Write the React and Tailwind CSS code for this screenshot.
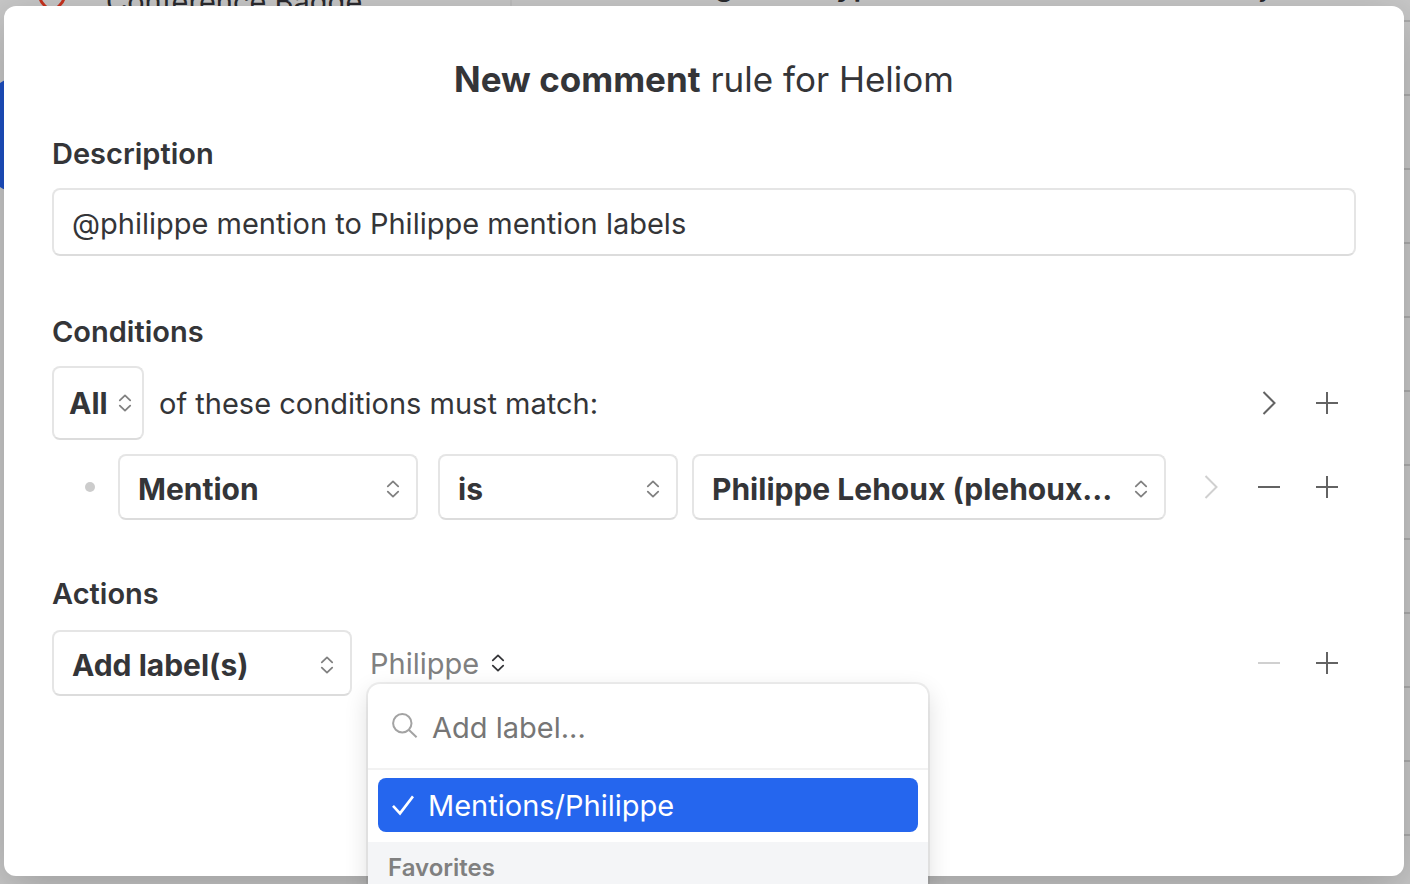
import React, { useState } from 'react';

function UpDown({ className }) {
  return (
    <svg
      className={className}
      width="14"
      height="18"
      viewBox="0 0 14 18"
      fill="none"
      stroke="currentColor"
      strokeWidth="1.8"
      strokeLinecap="round"
      strokeLinejoin="round"
      aria-hidden
    >
      <path d="M1.8 6.4 7 1.4l5.2 5M1.8 11.6 7 16.6l5.2-5" />
    </svg>
  );
}

function Picker({ label, value, onChange, options, className }) {
  return (
    <div className={`relative h-[66px] ${className}`}>
      <select
        aria-label={label}
        value={value}
        onChange={(e) => onChange(e.target.value)}
        className="w-full h-full appearance-none rounded-lg border-2 border-[#e5e5e5] border-b-[#dcdcdc] bg-white pl-[18px] pr-12 pt-1 text-[30px] font-bold text-ellipsis outline-none"
      >
        {options.map((o) => (
          <option key={o}>{o}</option>
        ))}
      </select>
      <UpDown className="pointer-events-none absolute right-[18px] top-[26px] text-[#808080]" />
    </div>
  );
}

const ICON_PATHS = {
  next: 'M6.5 1 17.5 12 6.5 23',
  remove: 'M1 12h22',
  add: 'M1 12h22M12 1v22',
};

function IconButton({ icon, label, disabled }) {
  return (
    <button
      type="button"
      aria-label={label}
      disabled={disabled}
      className="flex h-12 w-[58px] shrink-0 items-center justify-center text-[#636363] disabled:text-[#d0d0d0]"
    >
      <svg width="24" height="24" viewBox="0 0 24 24" fill="none" stroke="currentColor" strokeWidth="2" aria-hidden>
        <path d={ICON_PATHS[icon]} />
      </svg>
    </button>
  );
}

function Backdrop() {
  return (
    <div className="absolute inset-0 flex overflow-hidden bg-[#c8c8c8]" aria-hidden>
      <div className="w-[512px] shrink-0 border-r-2 border-[#bfbfbf]">
        <div className="flex h-5 items-end gap-10 pl-[38px]">
          <svg className="mb-2 shrink-0" width="28" height="24" viewBox="0 0 28 24" fill="none" stroke="#c8321e" strokeWidth="3">
            <path d="M2 9c0 5 3 7 6 10l6 4 6-4c3-3 6-5 6-10" />
          </svg>
          <span className="text-[29px] leading-9 text-[#2a2a2e]">Conference Badge</span>
        </div>
        <div className="mt-[60px] h-[110px] w-40 -ml-1 rounded-xl bg-[#1e50c4]" />
      </div>
      <div className="min-w-0 flex-1">
        <div className="flex h-[22px] items-end justify-between border-b-2 border-[#acacac] pl-[30px] pr-[136px] text-[29px] leading-9 text-[#2a2a2e]">
          <p className="mb-4 font-semibold whitespace-nowrap">[Missive] Bug in the types</p>
          <time className="mb-4">Friday</time>
        </div>
        {Array.from({ length: 12 }, (_, i) => (
          <div key={i} className="h-[74px] border-b-2 border-[#acacac]" />
        ))}
      </div>
    </div>
  );
}

function LabelMenu() {
  const [query, setQuery] = useState('');
  return (
    <div className="absolute left-0 top-[54px] z-10 w-[560px] rounded-xl bg-white shadow-[0_0_0_2px_rgba(0,0,0,0.06),0_8px_24px_rgba(0,0,0,0.14)]">
      <div className="flex h-[86px] items-center gap-3.5 border-b-2 border-[#f2f2f2] pl-6 pr-5">
        <svg width="26" height="26" viewBox="0 0 26 26" fill="none" stroke="#a3a3a3" strokeWidth="2" aria-hidden>
          <circle cx="10.3" cy="10.3" r="9.2" />
          <path d="m17 17 7.6 7.2" />
        </svg>
        <input
          type="text"
          aria-label="Add label"
          placeholder="Add label..."
          value={query}
          onChange={(e) => setQuery(e.target.value)}
          className="min-w-0 flex-1 pt-1 text-[29px] outline-none placeholder:text-[#767676]"
        />
      </div>
      <div className="px-2.5 pt-2 pb-2.5">
        <button
          type="button"
          className="flex h-[54px] w-full items-center gap-3.5 rounded-lg bg-[#2566ee] pl-3.5 text-left text-[29px] text-white"
        >
          <svg width="22" height="22" viewBox="0 0 22 22" fill="none" stroke="currentColor" strokeWidth="2.6" aria-hidden>
            <path d="m1 11.8 7 7.6L21 2.4" />
          </svg>
          <span className="pt-0.5">Mentions/Philippe</span>
        </button>
      </div>
      <h3 className="bg-[#f4f5f7] px-5 text-[24px] leading-[52px] font-semibold text-[#808080]">Favorites</h3>
    </div>
  );
}

export default function App() {
  const [description, setDescription] = useState('@philippe mention to Philippe mention labels');
  const [match, setMatch] = useState('All');
  const [field, setField] = useState('Mention');
  const [operator, setOperator] = useState('is');
  const [user, setUser] = useState('Philippe Lehoux (plehoux…');
  const [action, setAction] = useState('Add label(s)');

  return (
    <div className="relative flex h-screen overflow-hidden pt-1.5 pr-1.5 pb-2 pl-1 font-[Inter,sans-serif] text-[29px] text-[#343538]">
      <Backdrop />
      <main className="relative min-w-0 flex-1 rounded-xl bg-white px-12 pt-[54px] shadow-[0_12px_48px_rgba(0,0,0,0.22)]">
        <h1 className="text-center text-[35px] leading-[38px]">
          <b>New comment</b> rule for Heliom
        </h1>

        <label htmlFor="description" className="mt-[38px] mb-4 block leading-9 font-semibold">
          Description
        </label>
        <input
          id="description"
          type="text"
          value={description}
          onChange={(e) => setDescription(e.target.value)}
          className="h-[68px] w-full rounded-lg border-2 border-[#e5e5e5] border-b-[#dcdcdc] px-[18px] pt-0.5 outline-none"
        />

        <section className="mt-[58px]">
          <h2 className="mb-4 leading-9 font-semibold">Conditions</h2>
          <div className="flex items-center">
            <div className="relative h-[74px] w-[92px]">
              <select
                aria-label="Match"
                value={match}
                onChange={(e) => setMatch(e.target.value)}
                className="h-full w-full appearance-none rounded-lg border-2 border-[#e5e5e5] border-b-[#dcdcdc] bg-white pl-[15px] text-[30px] font-bold outline-none"
              >
                <option>All</option>
                <option>Any</option>
              </select>
              <UpDown className="pointer-events-none absolute right-3 top-7 text-[#808080]" />
            </div>
            <span className="ml-[15px] flex-1 pt-0.5">of these conditions must match:</span>
            <IconButton icon="next" label="Nest conditions" />
            <IconButton icon="add" label="Add condition" />
          </div>
          <div className="mt-3.5 flex items-center">
            <span className="w-[66px] shrink-0 pl-[33px]">
              <span className="block size-2.5 rounded-full bg-[#cccccc]" />
            </span>
            <Picker label="Field" className="w-[300px] mr-5" value={field} onChange={setField} options={['Mention', 'Author']} />
            <Picker label="Operator" className="w-60 mr-3.5" value={operator} onChange={setOperator} options={['is', 'is not']} />
            <Picker
              label="User"
              className="min-w-0 flex-1 mr-4"
              value={user}
              onChange={setUser}
              options={['Philippe Lehoux (plehoux…']}
            />
            <IconButton icon="next" label="Nest condition" disabled />
            <IconButton icon="remove" label="Remove condition" />
            <IconButton icon="add" label="Add condition" />
          </div>
        </section>

        <section className="mt-14">
          <h2 className="mb-[18px] leading-9 font-semibold">Actions</h2>
          <div className="flex items-center">
            <Picker
              label="Action"
              className="w-[300px] mr-4"
              value={action}
              onChange={setAction}
              options={['Add label(s)', 'Remove label(s)']}
            />
            <div className="relative h-[66px] flex-1">
              <button type="button" className="flex h-full items-center gap-3 px-0.5 text-[#808080]">
                <span className="pt-0.5">Philippe</span>
                <UpDown className="text-[#343538]" />
              </button>
              <LabelMenu />
            </div>
            <IconButton icon="remove" label="Remove action" disabled />
            <IconButton icon="add" label="Add action" />
          </div>
        </section>
      </main>
    </div>
  );
}
